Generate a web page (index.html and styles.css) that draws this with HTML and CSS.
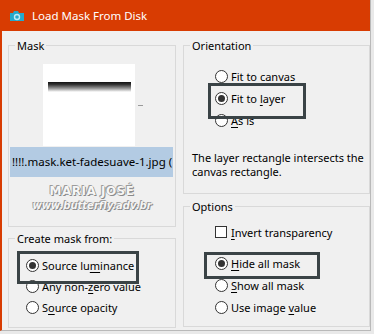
FILE: index.html
```html
<!DOCTYPE html>
<html lang="en">
<head>
  <meta charset="UTF-8">
  <meta name="viewport" content="width=device-width, initial-scale=1.0">
  <link rel="stylesheet" href="styles.css">
  <title>Load Mask From Disk</title>
</head>
<body>
  <div class="window">
    <div class="titlebar">
      <svg class="app-icon" width="16" height="12" viewBox="0 0 16 12">
        <path d="M1 3h3l1-2h4l1 2h5v8H1z" fill="#25a9cc"/>
        <circle cx="8" cy="7" r="3.2" fill="#bfe9f5"/>
        <circle cx="8" cy="7" r="1.8" fill="#25a9cc"/>
      </svg>
      <span class="title">Load Mask From Disk</span>
    </div>

    <div class="dialog">
      <div class="column">
        <fieldset class="group group-mask">
          <legend>Mask</legend>
          <div class="preview-row">
            <div class="preview"><div class="fade"></div></div>
            <span class="dash"></span>
          </div>
          <div class="file-name">!!!!.mask.ket-fadesuave-1.jpg (</div>
          <div class="watermark">
            <div class="wm-name">MARIA JOSÉ</div>
            <div class="wm-site">www.butterfly.adv.br</div>
          </div>
        </fieldset>

        <fieldset class="group group-source">
          <legend>Create mask from:</legend>
          <div class="option mark mark-source"><span class="radio checked"></span><span>Source lu<u>m</u>inance</span></div>
          <div class="option"><span class="radio"></span><span>Any non-<u>z</u>ero value</span></div>
          <div class="option"><span class="radio"></span><span>S<u>o</u>urce opacity</span></div>
        </fieldset>
      </div>

      <div class="column">
        <fieldset class="group group-orient">
          <legend>Orientation</legend>
          <div class="option"><span class="radio"></span><span>Fit to <u>c</u>anvas</span></div>
          <div class="option mark mark-layer"><span class="radio checked"></span><span>Fit to <u>l</u>ayer</span></div>
          <div class="option"><span class="radio"></span><span><u>A</u>s is</span></div>
          <p class="note">The layer rectangle intersects the canvas rectangle.</p>
        </fieldset>

        <fieldset class="group group-options">
          <legend>Options</legend>
          <div class="option option-check"><span class="checkbox"></span><span><u>I</u>nvert transparency</span></div>
          <div class="option mark mark-hide"><span class="radio checked"></span><span><u>H</u>ide all mask</span></div>
          <div class="option"><span class="radio"></span><span><u>S</u>how all mask</span></div>
          <div class="option"><span class="radio"></span><span>Use image <u>v</u>alue</span></div>
        </fieldset>
      </div>
    </div>
  </div>
</body>
</html>
```

FILE: styles.css
```css
* {
  box-sizing: border-box;
}

html {
  background: #e9e9e9;
}

body {
  margin: 0;
  font-family: "Noto Sans", "Open Sans", sans-serif;
  font-size: 11px;
  color: #000;
}

.window {
  width: 371px;
  height: 331px;
  background: #f0f0f0;
  border-left: 2px solid #d83c02;
  border-right: 1px solid #b9b9b9;
  border-bottom: 1px solid #b9b9b9;
}

.titlebar {
  height: 31px;
  margin-left: -2px;
  background: #d83c02;
  display: flex;
  align-items: center;
  padding-left: 9px;
  color: #fff;
}

.app-icon {
  margin-right: 7px;
}

.title {
  font-size: 11.5px;
}

.dialog {
  display: grid;
  grid-template-columns: 168px 187px;
  column-gap: 7px;
  padding: 7px 0 0 6px;
}

.column {
  display: flex;
  flex-direction: column;
}

.group {
  margin: 0;
  padding: 0;
  border: 1px solid #d9d9d9;
  min-width: 0;
}

.group legend {
  margin-left: 6px;
  padding: 0 2px;
  line-height: 15px;
}

.group-mask {
  height: 189px;
  padding-top: 11px;
}

.group-source {
  height: 97px;
  margin-top: 4px;
  padding-top: 9px;
}

.group-orient {
  height: 156px;
  padding-top: 12px;
}

.group-options {
  height: 128px;
  margin-top: 5px;
  padding-top: 7px;
}

/* mask preview */
.preview-row {
  display: flex;
  align-items: center;
  margin-left: 34px;
}

.preview {
  width: 92px;
  height: 82px;
  background: #fff;
  padding: 18px 4px 0 5px;
}

.fade {
  height: 10px;
  background: linear-gradient(#111 0%, #333 25%, #999 65%, #fff 100%);
}

.dash {
  width: 5px;
  height: 1px;
  margin-left: 3px;
  background: #9a9a9a;
}

.file-name {
  height: 30px;
  margin: 1px 2px 0 1px;
  padding-left: 2px;
  background: #b3cbe3;
  font-size: 11.5px;
  line-height: 30px;
  white-space: nowrap;
  overflow: hidden;
}

.watermark {
  text-align: center;
  color: #f6f6f6;
  font-family: "DejaVu Sans", sans-serif;
  font-weight: bold;
  text-shadow: 1px 1px 0 #8a8a8a, -1px -1px 0 #9c9c9c, 0 0 1px #666;
}

.wm-name {
  margin-top: 7px;
  font-size: 12px;
  line-height: 15px;
  letter-spacing: 0.5px;
}

.wm-site {
  font-size: 10px;
  font-style: italic;
  line-height: 14px;
}

/* radio and check rows */
.option {
  display: flex;
  align-items: center;
  height: 21px;
  width: fit-content;
  margin-left: 17px;
  white-space: nowrap;
}

.group-orient .option,
.group-options .option {
  height: 22px;
  margin-left: 31px;
}

.option u {
  text-underline-offset: 2px;
}

.radio,
.checkbox {
  width: 13px;
  height: 13px;
  margin-right: 3px;
  border: 1px solid #333;
  background: #fff;
  flex-shrink: 0;
}

.radio {
  border-radius: 50%;
  display: flex;
  align-items: center;
  justify-content: center;
}

.radio.checked::before {
  content: "";
  width: 7px;
  height: 7px;
  border-radius: 50%;
  background: #333;
}

.checkbox {
  width: 12px;
  height: 12px;
  margin-right: 4px;
}

.option-check {
  margin-bottom: 9px;
}

.note {
  margin: 20px 0 0 8px;
  line-height: 14px;
  width: 175px;
}

/* tutorial highlight frames */
.mark {
  position: relative;
}

.mark::after {
  content: "";
  position: absolute;
  border: 3px solid #3a4346;
}

.mark-source::after {
  left: -9px;
  top: -4px;
  width: 116px;
  height: 27px;
}

.mark-layer::after {
  left: -7px;
  top: -4px;
  width: 92px;
  height: 30px;
}

.mark-hide::after {
  left: -11px;
  top: 0;
  width: 110px;
  height: 21px;
}
```
